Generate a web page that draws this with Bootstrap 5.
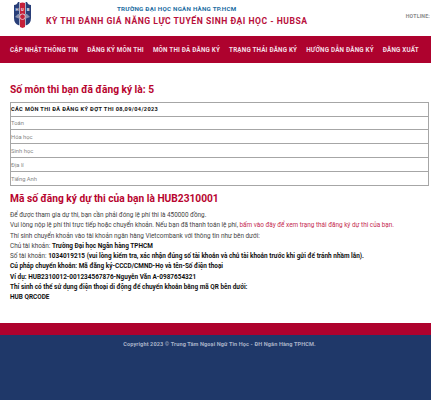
<!DOCTYPE html>
<html lang="vi">
<head>
<meta charset="utf-8">
<meta name="viewport" content="width=device-width, initial-scale=1">
<title>HUBSA</title>
<link href="https://cdn.jsdelivr.net/npm/bootstrap@5.3.0/dist/css/bootstrap.min.css" rel="stylesheet">
<style>
body{font-family:Roboto,"Liberation Sans",sans-serif;font-size:6.39px;line-height:10.25px;color:#444;background:#fff;height:400px;overflow:hidden;white-space:nowrap}
.top-bar{height:35.5px;padding-left:14px}
.crest{width:17px;height:29px}
.brand-text{margin-left:15px;padding-top:4.5px}
.school{font-size:6.2px;line-height:9px;font-weight:700;color:#1a6c9f;padding-left:71px;letter-spacing:.24px}
.exam{font-size:8.6px;line-height:14px;font-weight:700;color:#b8103c;letter-spacing:.5px}
.hotline{font-size:5.2px;font-weight:700;color:#8a8a8a;letter-spacing:.2px;padding-top:10.5px;padding-right:1px}
.main-nav{height:27.5px;background:#ae022e;padding-left:10px;padding-top:1px;gap:9px}
.main-nav .nav-link{font-size:6.3px;font-weight:700;color:#f4dfe5;padding:0;letter-spacing:.18px}
main{height:260px;padding:20.4px 2px 0 10px}
h2{font-size:10.2px;line-height:14px;font-weight:700;color:#b8042f;margin:0}
.subjects{width:418.5px;margin:4.8px 0 0;border-collapse:collapse;font-size:5.8px;line-height:10px;color:#858585}
.subjects th,.subjects td{border:1px solid #a6a6a6;padding:0;height:14px;vertical-align:middle}
.subjects th{color:#111;font-size:5.6px;font-weight:700;letter-spacing:.37px}
.subjects tr:nth-child(-n+2)>*{height:13.5px}
.code-title{margin-top:6px}
.info{margin-top:4px}
.info b{color:#111;font-size:6.43px}
.info a{color:#c52a50}
.red-strip{height:12.3px;background:#ae022e}
footer{height:65px;background:#1f3869;color:#a9b3c8;font-size:5.6px;font-weight:700;padding-top:3.3px;padding-left:8px;letter-spacing:.1px}
</style>
</head>
<body>
<header class="top-bar d-flex align-items-start">
<svg class="crest" viewBox="0 0 17 29">
<path d="M0 5Q3 5 4 2H5.4V25.5Q0 24 0 18Z" fill="#293e78"/>
<path d="M6 3Q8.500 2 11 3V27L8.500 28L6 27Z" fill="#c5213a"/>
<path d="M11.600 2H13Q14 5 17 5V18Q17 24 11.600 25.500Z" fill="#293e78"/>
<path d="M1 17L4 14H13L16 17L11 19H6Z" fill="#8992af"/>
<circle cx="8.500" cy="16.700" r="2.800" fill="#c5213a" stroke="#f3d9de" stroke-width=".8"/>
<g fill="#eef0f6" font-family="Roboto,sans-serif" font-weight="700" font-size="4.200" text-anchor="middle"><text x="2.900" y="10.600">H</text><text x="8.500" y="10.600">U</text><text x="14" y="10.600">B</text></g>
</svg>
<div class="brand-text"><div class="school">TRƯỜNG ĐẠI HỌC NGÂN HÀNG TP.HCM</div><div class="exam">KỲ THI ĐÁNH GIÁ NĂNG LỰC TUYỂN SINH ĐẠI HỌC - HUBSA</div></div>
<div class="hotline ms-auto">HOTLINE:</div>
</header>
<nav class="main-nav d-flex align-items-center">
<a class="nav-link">CẬP NHẬT THÔNG TIN</a><a class="nav-link">ĐĂNG KÝ MÔN THI</a><a class="nav-link">MÔN THI ĐÃ ĐĂNG KÝ</a><a class="nav-link">TRẠNG THÁI ĐĂNG KÝ</a><a class="nav-link">HƯỚNG DẪN ĐĂNG KÝ</a><a class="nav-link">ĐĂNG XUẤT</a>
</nav>
<main>
<h2>Số môn thi bạn đã đăng ký là: 5</h2>
<table class="subjects">
<tr><th>CÁC MÔN THI ĐÃ ĐĂNG KÝ ĐỢT THI 08,09/04/2023</th></tr>
<tr><td>Toán</td></tr><tr><td>Hóa học</td></tr><tr><td>Sinh học</td></tr><tr><td>Địa lí</td></tr><tr><td>Tiếng Anh</td></tr>
</table>
<h2 class="code-title">Mã số đăng ký dự thi của bạn là HUB2310001</h2>
<div class="info">
<div>Để được tham gia dự thi, bạn cần phải đóng lệ phí thi là 450000 đồng.</div>
<div>Vui lòng nộp lệ phí thi trực tiếp hoặc chuyển khoản. Nếu bạn đã thanh toán lệ phí, <a class="text-decoration-none">bấm vào đây để xem trạng thái đăng ký dự thi của bạn.</a></div>
<div>Thí sinh chuyển khoản vào tài khoản ngân hàng Vietcombank với thông tin như bên dưới:</div>
<div>Chủ tài khoản: <b>Trường Đại học Ngân hàng TPHCM</b></div>
<div>Số tài khoản: <b>1034019215 (vui lòng kiểm tra, xác nhận đúng số tài khoản và chủ tài khoản trước khi gửi để tránh nhầm lẫn).</b></div>
<div><b>Cú pháp chuyển khoản: Mã đăng ký-CCCD/CMND-Họ và tên-Số điện thoại</b></div>
<div><b>Ví dụ: HUB2310012-001234567876-Nguyễn Văn A-0987654321</b></div>
<div><b>Thí sinh có thể sử dụng điện thoại di động để chuyển khoản bằng mã QR bên dưới:</b></div>
<div><b>HUB QRCODE</b></div>
</div>
</main>
<div class="red-strip"></div>
<footer class="text-center">Copyright 2023 © Trung Tâm Ngoại Ngữ Tin Học - ĐH Ngân Hàng TPHCM.</footer>
<script src="https://cdn.jsdelivr.net/npm/bootstrap@5.3.0/dist/js/bootstrap.bundle.min.js"></script>
</body>
</html>
